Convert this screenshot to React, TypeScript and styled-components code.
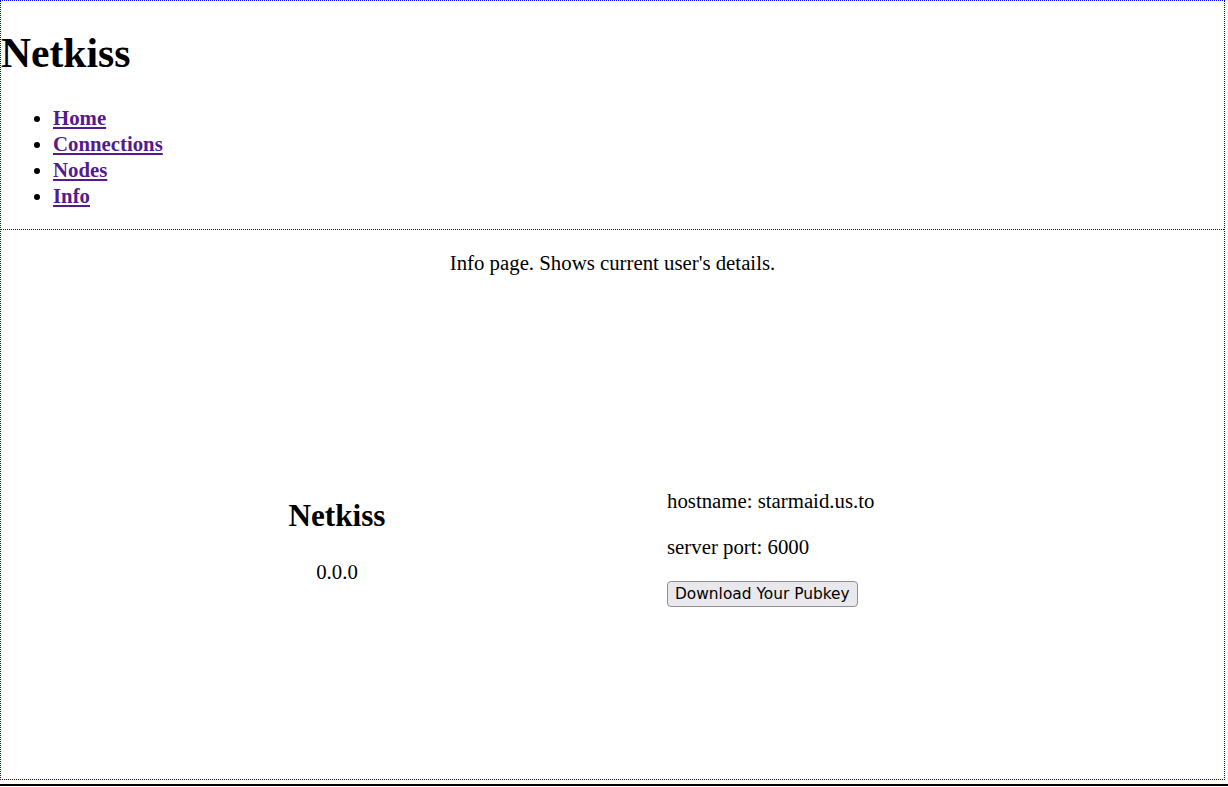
import React from 'react';
import styled, { createGlobalStyle } from 'styled-components';

const GlobalStyle = createGlobalStyle`
  body {
    margin: 0;
    font-family: "Liberation Serif", "Times New Roman", serif;
    font-size: 20.8px;
    color: #000;
    background: #fff;
  }
`;

const Page = styled.div`
  box-sizing: border-box;
  width: 1225px;
  height: 780px;
  border: 1px dotted #0000ff;
  display: flex;
  flex-direction: column;
`;

const Header = styled.header`
  border-bottom: 1px dotted #0000ff;
`;

const Title = styled.h1`
  font-size: 2em;
  margin: 0.67em 0;
`;

const NavList = styled.ul`
  margin: 1em 0 20px;
  padding-left: 52px;
  list-style: disc;
`;

const NavItem = styled.li`
  line-height: 26px;
  font-weight: bold;
`;

const NavLink = styled.a`
  color: #551a8b;
  text-decoration: underline;
`;

const Main = styled.main`
  flex: 1;
  display: flex;
  flex-direction: column;
`;

const Intro = styled.p`
  text-align: center;
  margin: 1em 0;
`;

const Columns = styled.div`
  flex: 1;
  display: grid;
  grid-template-columns: 660px 1fr;
  align-items: center;
  padding-left: 6px;
`;

const AppCard = styled.div`
  text-align: center;
  padding-top: 2px;
`;

const AppName = styled.h2`
  font-size: 1.5em;
  margin: 0.83em 0;
`;

const Text = styled.p<{ tall?: boolean }>`
  margin: 1em 0;
  line-height: ${(p) => (p.tall ? '25px' : 'normal')};
`;

const Details = styled.div``;

const ButtonRow = styled.div`
  padding-top: 2px;
`;

const Button = styled.button`
  display: block;
  font-family: "DejaVu Sans", sans-serif;
  font-size: 15.4px;
  height: 26px;
  padding: 0 7px;
  background: #e9e9ed;
  border: 1px solid #8f8f9d;
  border-radius: 4px;
  color: #000;
  cursor: pointer;
`;

const Footer = styled.footer`
  margin-top: 4px;
  width: 1228px;
  border-top: 2px solid #000;
`;

export default function App() {
  const links = ['Home', 'Connections', 'Nodes', 'Info'];
  return (
    <>
      <GlobalStyle />
      <Page>
        <Header>
          <Title>Netkiss</Title>
          <NavList>
            {links.map((l) => (
              <NavItem key={l}>
                <NavLink href="#">{l}</NavLink>
              </NavItem>
            ))}
          </NavList>
        </Header>
        <Main>
          <Intro>Info page. Shows current user's details.</Intro>
          <Columns>
            <AppCard>
              <AppName>Netkiss</AppName>
              <Text>0.0.0</Text>
            </AppCard>
            <Details>
              <Text tall>hostname: starmaid.us.to</Text>
              <Text tall>server port: 6000</Text>
              <ButtonRow>
                <Button>Download Your Pubkey</Button>
              </ButtonRow>
            </Details>
          </Columns>
        </Main>
      </Page>
      <Footer />
    </>
  );
}
